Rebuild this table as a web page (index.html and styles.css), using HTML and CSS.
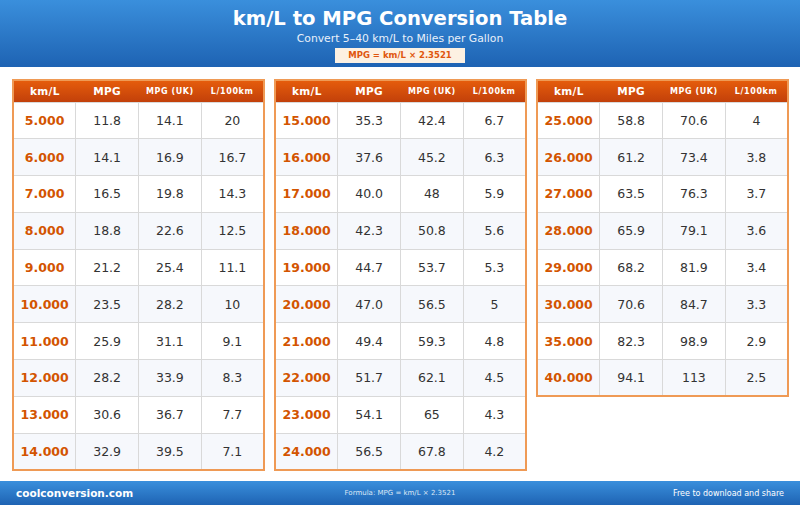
FILE: index.html
```html
<!DOCTYPE html>
<html>
<head>
<meta charset="utf-8">
<link rel="stylesheet" href="styles.css">
</head>
<body>
<header class="top">
  <h1 class="title">km/L to MPG Conversion Table</h1>
  <div class="subtitle">Convert 5–40 km/L to Miles per Gallon</div>
  <div class="formula">MPG = km/L × 2.3521</div>
</header>
<main class="tables">
  <table class="conv">
    <thead><tr><th>km/L</th><th>MPG</th><th class="sm">MPG (UK)</th><th class="sm">L/100km</th></tr></thead>
    <tbody>
      <tr><td class="k">5.000</td><td>11.8</td><td>14.1</td><td>20</td></tr>
      <tr><td class="k">6.000</td><td>14.1</td><td>16.9</td><td>16.7</td></tr>
      <tr><td class="k">7.000</td><td>16.5</td><td>19.8</td><td>14.3</td></tr>
      <tr><td class="k">8.000</td><td>18.8</td><td>22.6</td><td>12.5</td></tr>
      <tr><td class="k">9.000</td><td>21.2</td><td>25.4</td><td>11.1</td></tr>
      <tr><td class="k">10.000</td><td>23.5</td><td>28.2</td><td>10</td></tr>
      <tr><td class="k">11.000</td><td>25.9</td><td>31.1</td><td>9.1</td></tr>
      <tr><td class="k">12.000</td><td>28.2</td><td>33.9</td><td>8.3</td></tr>
      <tr><td class="k">13.000</td><td>30.6</td><td>36.7</td><td>7.7</td></tr>
      <tr><td class="k">14.000</td><td>32.9</td><td>39.5</td><td>7.1</td></tr>
    </tbody>
  </table>
  <table class="conv">
    <thead><tr><th>km/L</th><th>MPG</th><th class="sm">MPG (UK)</th><th class="sm">L/100km</th></tr></thead>
    <tbody>
      <tr><td class="k">15.000</td><td>35.3</td><td>42.4</td><td>6.7</td></tr>
      <tr><td class="k">16.000</td><td>37.6</td><td>45.2</td><td>6.3</td></tr>
      <tr><td class="k">17.000</td><td>40.0</td><td>48</td><td>5.9</td></tr>
      <tr><td class="k">18.000</td><td>42.3</td><td>50.8</td><td>5.6</td></tr>
      <tr><td class="k">19.000</td><td>44.7</td><td>53.7</td><td>5.3</td></tr>
      <tr><td class="k">20.000</td><td>47.0</td><td>56.5</td><td>5</td></tr>
      <tr><td class="k">21.000</td><td>49.4</td><td>59.3</td><td>4.8</td></tr>
      <tr><td class="k">22.000</td><td>51.7</td><td>62.1</td><td>4.5</td></tr>
      <tr><td class="k">23.000</td><td>54.1</td><td>65</td><td>4.3</td></tr>
      <tr><td class="k">24.000</td><td>56.5</td><td>67.8</td><td>4.2</td></tr>
    </tbody>
  </table>
  <table class="conv">
    <thead><tr><th>km/L</th><th>MPG</th><th class="sm">MPG (UK)</th><th class="sm">L/100km</th></tr></thead>
    <tbody>
      <tr><td class="k">25.000</td><td>58.8</td><td>70.6</td><td>4</td></tr>
      <tr><td class="k">26.000</td><td>61.2</td><td>73.4</td><td>3.8</td></tr>
      <tr><td class="k">27.000</td><td>63.5</td><td>76.3</td><td>3.7</td></tr>
      <tr><td class="k">28.000</td><td>65.9</td><td>79.1</td><td>3.6</td></tr>
      <tr><td class="k">29.000</td><td>68.2</td><td>81.9</td><td>3.4</td></tr>
      <tr><td class="k">30.000</td><td>70.6</td><td>84.7</td><td>3.3</td></tr>
      <tr><td class="k">35.000</td><td>82.3</td><td>98.9</td><td>2.9</td></tr>
      <tr><td class="k">40.000</td><td>94.1</td><td>113</td><td>2.5</td></tr>
    </tbody>
  </table>
</main>
<footer class="bottom">
  <div class="site">coolconversion.com</div>
  <div class="foot-formula">Formula: MPG = km/L × 2.3521</div>
  <div class="share">Free to download and share</div>
</footer>
</body>
</html>
```

FILE: styles.css
```css
* { box-sizing: border-box; }
html, body { margin: 0; padding: 0; }
body {
  width: 800px;
  height: 505px;
  overflow: hidden;
  font-family: "DejaVu Sans", Verdana, sans-serif;
  background: #ffffff;
  display: flex;
  flex-direction: column;
}
.top {
  height: 67px;
  background: linear-gradient(to bottom, #3a8fdc, #1e63b3);
  color: #fff;
  display: flex;
  flex-direction: column;
  align-items: center;
  padding-top: 8px;
}
.title {
  margin: 0;
  font-size: 19.6px;
  line-height: 22px;
  font-weight: bold;
}
.subtitle {
  font-size: 10.8px;
  line-height: 13px;
  margin-top: 2px;
  color: #e8f0fa;
}
.formula {
  margin-top: 3px;
  background: #fdf1e2;
  color: #e0560e;
  font-size: 8.5px;
  font-weight: bold;
  width: 130px;
  height: 15px;
  line-height: 15px;
  text-align: center;
}
.tables {
  display: grid;
  grid-template-columns: repeat(3, 253px);
  column-gap: 9px;
  padding: 12px 12px 0 12px;
  align-items: start;
  height: 414px;
}
.conv {
  border-collapse: collapse;
  border: 2px solid #ef9a55;
  width: 253px;
  table-layout: fixed;
}
.conv th {
  background: linear-gradient(to bottom, #e55c0c, #c2400a);
  color: #fff;
  font-size: 10.5px;
  font-weight: bold;
  letter-spacing: 0.3px;
  height: 22px;
  padding: 0;
  text-align: center;
}
.conv th.sm { font-size: 8px; letter-spacing: 0.6px; }
.conv td {
  height: 36.8px;
  padding: 0;
  text-align: center;
  font-size: 12.5px;
  color: #333;
  border: 1px solid #d9d9d9;
}
.conv tbody tr:nth-child(even) td { background: #f6f8fc; }
.conv td.k {
  color: #d35400;
  font-weight: bold;
}
.bottom {
  margin-top: auto;
  height: 24px;
  background: linear-gradient(to bottom, #3a8fdc, #1e63b3);
  color: #fff;
  display: flex;
  align-items: center;
  justify-content: space-between;
  padding: 0 16px;
}
.site {
  font-size: 10.5px;
  font-weight: bold;
  width: 180px;
}
.foot-formula {
  font-size: 7px;
  color: #dbe7f5;
}
.share {
  font-size: 8px;
  width: 180px;
  text-align: right;
}
```
